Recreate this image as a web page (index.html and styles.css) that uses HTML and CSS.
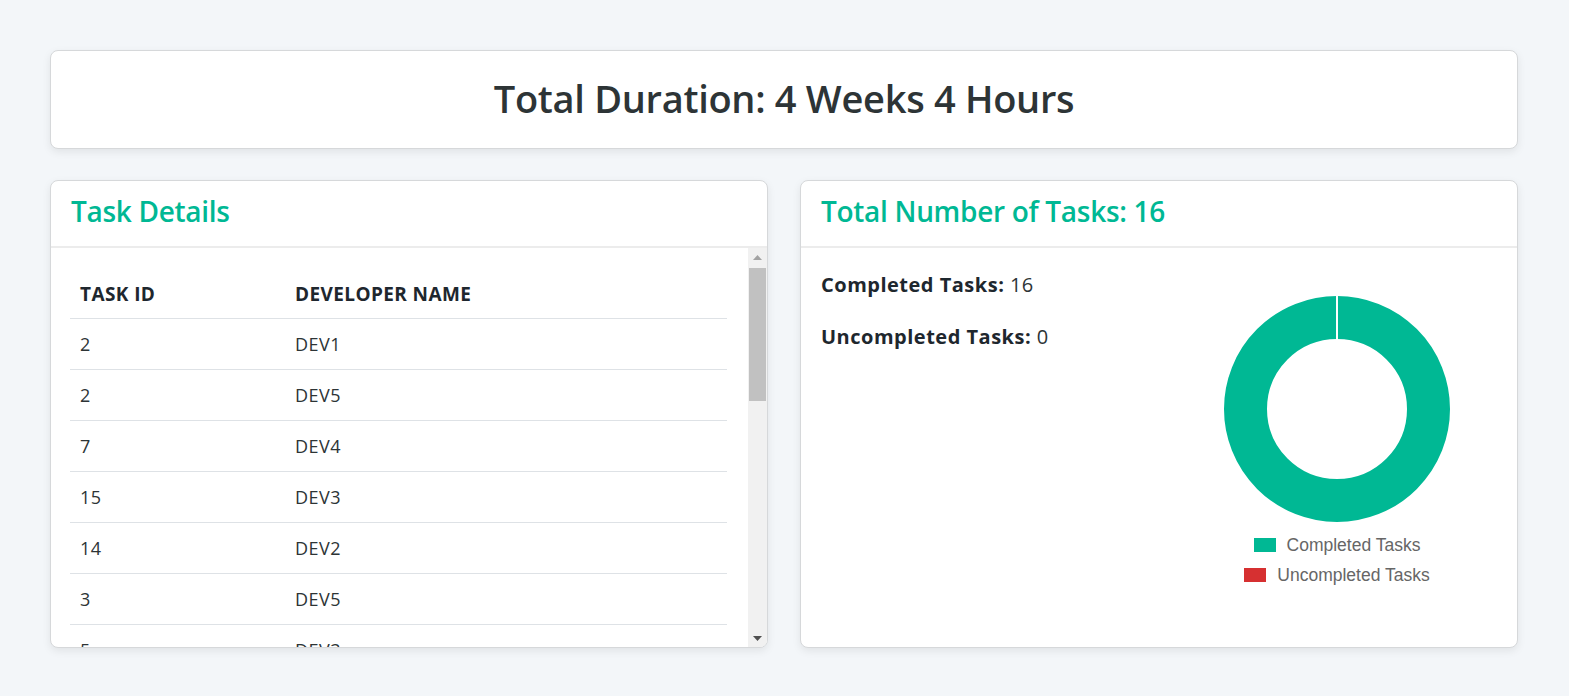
FILE: index.html
```html
<!DOCTYPE html>
<html>
<head>
<meta charset="utf-8">
<link rel="stylesheet" href="styles.css">
</head>
<body>
<div class="page">
  <div class="card summary">
    <h1 class="summary-title">Total Duration: 4 Weeks 4 Hours</h1>
  </div>
  <div class="grid">
    <div class="card panel">
      <div class="panel-header"><h2 class="panel-title">Task Details</h2></div>
      <div class="panel-body scroll-wrap">
        <div class="scroll-content">
          <table class="tasks">
            <thead><tr><th class="col-id">Task ID</th><th>Developer Name</th></tr></thead>
            <tbody>
              <tr><td>2</td><td>DEV1</td></tr>
              <tr><td>2</td><td>DEV5</td></tr>
              <tr><td>7</td><td>DEV4</td></tr>
              <tr><td>15</td><td>DEV3</td></tr>
              <tr><td>14</td><td>DEV2</td></tr>
              <tr><td>3</td><td>DEV5</td></tr>
              <tr><td>5</td><td>DEV3</td></tr>
              <tr><td>9</td><td>DEV1</td></tr>
              <tr><td>11</td><td>DEV4</td></tr>
              <tr><td>1</td><td>DEV2</td></tr>
              <tr><td>6</td><td>DEV5</td></tr>
              <tr><td>8</td><td>DEV3</td></tr>
              <tr><td>10</td><td>DEV1</td></tr>
              <tr><td>12</td><td>DEV2</td></tr>
              <tr><td>13</td><td>DEV4</td></tr>
              <tr><td>16</td><td>DEV5</td></tr>
            </tbody>
          </table>
        </div>
        <div class="scrollbar">
          <div class="sb-btn"><svg width="9" height="5" viewBox="0 0 9 5"><polygon points="0,5 9,5 4.5,0" fill="#a3a3a3"/></svg></div>
          <div class="sb-track"><div class="sb-thumb"></div></div>
          <div class="sb-btn"><svg width="9" height="5" viewBox="0 0 9 5"><polygon points="0,0 9,0 4.5,5" fill="#505050"/></svg></div>
        </div>
      </div>
    </div>
    <div class="card panel">
      <div class="panel-header"><h2 class="panel-title">Total Number of Tasks: 16</h2></div>
      <div class="panel-body stats">
        <div class="stat-list">
          <p class="stat"><strong>Completed Tasks:</strong> 16</p>
          <p class="stat"><strong>Uncompleted Tasks:</strong> 0</p>
        </div>
        <div class="chart">
          <svg class="donut" width="230" height="230" viewBox="0 0 230 230">
            <circle cx="115" cy="115" r="91.5" fill="none" stroke="#00b894" stroke-width="43"/>
            <line x1="115" y1="0" x2="115" y2="46" stroke="#fff" stroke-width="2"/>
          </svg>
          <ul class="legend">
            <li class="legend-item"><span class="swatch green"></span>Completed Tasks</li>
            <li class="legend-item"><span class="swatch red"></span>Uncompleted Tasks</li>
          </ul>
        </div>
      </div>
    </div>
  </div>
</div>
</body>
</html>
```
FILE: styles.css
```css
* { box-sizing: border-box; }
html, body { margin: 0; padding: 0; }
body {
  background: #f3f6f9;
  font-family: "Open Sans", "Noto Sans", sans-serif;
  color: #2d3436;
}
.page {
  padding: 50px 51px 48px 50px;
  display: flex;
  flex-direction: column;
  gap: 31px;
}
.card {
  background: #fff;
  border: 1px solid #d6d8da;
  border-radius: 8px;
  box-shadow: 0 3px 8px rgba(0, 0, 0, 0.08);
}
.summary {
  height: 99px;
  display: flex;
  align-items: center;
  justify-content: center;
  padding-bottom: 4px;
}
.summary-title {
  margin: 0;
  font-size: 38px;
  font-weight: 600;
  color: #2d3436;
  letter-spacing: -0.3px;
}
.grid {
  display: grid;
  grid-template-columns: 1fr 1fr;
  gap: 32px;
  height: 468px;
}
.panel {
  display: flex;
  flex-direction: column;
  overflow: hidden;
}
.panel-header {
  height: 67px;
  flex: none;
  padding: 0 20px 5px 20px;
  display: flex;
  align-items: center;
  border-bottom: 2px solid #ececec;
}
.panel-title {
  margin: 0;
  font-size: 28px;
  font-weight: 600;
  color: #00b894;
  letter-spacing: -0.3px;
}
.panel-body {
  flex: 1;
  min-height: 0;
  padding: 20px;
}
.scroll-wrap {
  display: flex;
  padding: 0;
}
.scroll-content {
  flex: 1;
  min-width: 0;
  overflow: hidden;
  padding: 20px 21px 0 19px;
}
.scrollbar {
  width: 19px;
  flex: none;
  background: #f1f1f1;
  display: flex;
  flex-direction: column;
}
.sb-btn {
  height: 18px;
  display: flex;
  align-items: center;
  justify-content: center;
}
.sb-track { flex: 1; padding: 2px 1px 0 1px; }
.sb-thumb { height: 133px; background: #c1c1c1; }
.tasks {
  width: 100%;
  border-collapse: collapse;
  font-size: 18px;
}
.tasks th {
  text-align: left;
  text-transform: uppercase;
  font-weight: 700;
  font-size: 19px;
  color: #1e272e;
  padding: 2px 10px 0 10px;
  height: 50px;
  border-bottom: 1px solid #dee2e6;
  letter-spacing: 0.4px;
}
.tasks .col-id { width: 215px; }
.tasks td {
  padding: 0 10px;
  height: 51px;
  border-bottom: 1px solid #dee2e6;
  color: #2d3436;
  letter-spacing: 0.5px;
}
.stats {
  display: flex;
  padding-top: 24px;
}
.stat-list { flex: 1; }
.stat {
  margin: 0 0 27px 0;
  font-size: 20px;
  line-height: 25px;
  color: #2d3436;
  letter-spacing: 0.4px;
}
.stat strong { font-weight: 700; color: #1e272e; letter-spacing: 0.5px; }
.chart {
  width: 230px;
  margin-right: 45px;
  margin-top: 22px;
  display: flex;
  flex-direction: column;
  align-items: center;
}
.donut { display: block; }
.legend {
  list-style: none;
  margin: 10px 0 0 0;
  padding: 0;
  display: flex;
  flex-direction: column;
  align-items: center;
  gap: 8px;
  font-family: "Liberation Sans", Arial, sans-serif;
  font-size: 17.5px;
  color: #666;
}
.legend-item { display: flex; align-items: center; line-height: 22px; }
.swatch { width: 22px; height: 14px; margin-right: 11px; display: inline-block; }
.green { background: #00b894; }
.red { background: #d63031; }
```
